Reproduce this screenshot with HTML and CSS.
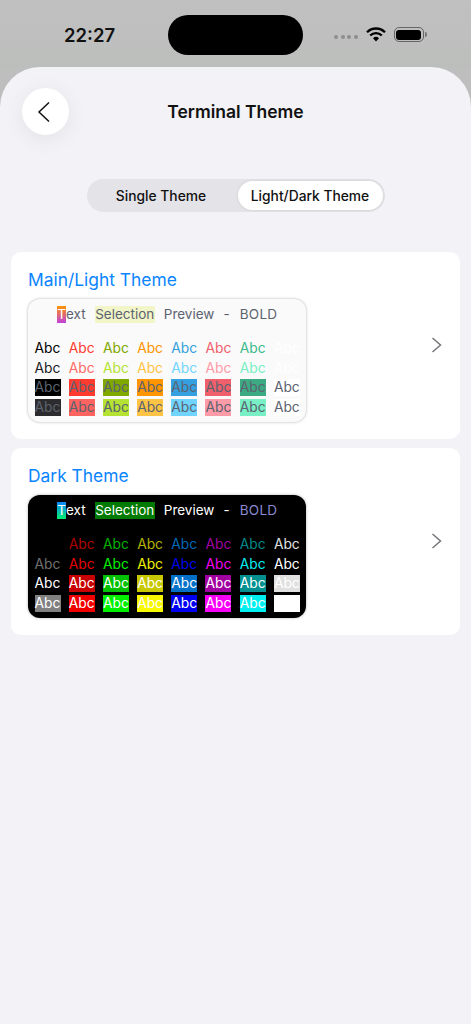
FILE: index.html
```html
<!DOCTYPE html>
<html>
<head>
  <title>Terminal Theme</title>
  <link rel="stylesheet" href="styles.css">
</head>
<body>
  <div class="status-bar">
    <span class="time">22:27</span>
    <div class="island"></div>
    <div class="status-icons">
      <div class="dots"><i></i><i></i><i></i><i></i></div>
      <svg class="wifi" width="20" height="15" viewBox="0 0 20 15">
        <path d="M1 5.2a12.8 12.8 0 0 1 18 0" fill="none" stroke="#000" stroke-width="2.3"/>
        <path d="M4.2 8.5a8.2 8.2 0 0 1 11.6 0" fill="none" stroke="#000" stroke-width="2.3"/>
        <path d="M7 11.3a4.3 4.3 0 0 1 6 0L10 14.4z" fill="#000"/>
      </svg>
      <div class="battery"><div class="battery-fill"></div></div>
      <div class="battery-cap"></div>
    </div>
  </div>

  <div class="sheet">
    <header class="nav">
      <button class="back">
        <svg width="14" height="22" viewBox="0 0 14 22"><path d="M12 1.500 2 11l10 9.500" fill="none" stroke="#111" stroke-width="1.5"/></svg>
      </button>
      <h1>Terminal Theme</h1>
    </header>

    <div class="segment">
      <div class="seg-item">Single Theme</div>
      <div class="seg-item active">Light/Dark Theme</div>
    </div>

    <section class="card">
      <div class="card-body">
        <h2>Main/Light Theme</h2>
        <div class="preview light">
          <div class="line">
            <span class="cursor">T</span><span>ext</span>
            <span class="sel">Selection</span>
            <span class="word">Preview</span>
            <span class="word">-</span>
            <span class="bold">BOLD</span>
          </div>
          <div class="grid">
            <span style="color:#000">Abc</span><span style="color:#ff3b30">Abc</span><span style="color:#7fa800">Abc</span><span style="color:#ff9500">Abc</span><span style="color:#34a0e0">Abc</span><span style="color:#f0606c">Abc</span><span style="color:#3cba8a">Abc</span><span style="color:#fff">Abc</span>
            <span style="color:#1c1c1e">Abc</span><span style="color:#ff6b66">Abc</span><span style="color:#b4e333">Abc</span><span style="color:#ffc445">Abc</span><span style="color:#70d4ff">Abc</span><span style="color:#ff9aa8">Abc</span><span style="color:#78efc4">Abc</span><span style="color:#fff">Abc</span>
            <span style="background:#000">Abc</span><span style="background:#ff3b30">Abc</span><span style="background:#7fa800">Abc</span><span style="background:#ff9500">Abc</span><span style="background:#34a0e0">Abc</span><span style="background:#f0606c">Abc</span><span style="background:#3cab84">Abc</span><span style="background:#fff">Abc</span>
            <span style="background:#2c2c2e">Abc</span><span style="background:#ff6460">Abc</span><span style="background:#b4e333">Abc</span><span style="background:#ffc445">Abc</span><span style="background:#70d4ff">Abc</span><span style="background:#ff9aa8">Abc</span><span style="background:#78efc4">Abc</span><span style="background:#fff">Abc</span>
          </div>
        </div>
      </div>
      <svg class="chevron" width="11" height="18" viewBox="0 0 11 18"><path d="M1.500 2 9.500 9l-8 7" fill="none" stroke="#76767a" stroke-width="1.500"/></svg>
    </section>

    <section class="card">
      <div class="card-body">
        <h2>Dark Theme</h2>
        <div class="preview dark">
          <div class="line">
            <span class="cursor">T</span><span>ext</span>
            <span class="sel">Selection</span>
            <span class="word">Preview</span>
            <span class="word">-</span>
            <span class="bold">BOLD</span>
          </div>
          <div class="grid">
            <span style="color:#000">Abc</span><span style="color:#b20000">Abc</span><span style="color:#00b200">Abc</span><span style="color:#b2b200">Abc</span><span style="color:#0068b8">Abc</span><span style="color:#a000a0">Abc</span><span style="color:#008888">Abc</span><span style="color:#e0e0e0">Abc</span>
            <span style="color:#707070">Abc</span><span style="color:#e60000">Abc</span><span style="color:#00f000">Abc</span><span style="color:#f0f000">Abc</span><span style="color:#0000f0">Abc</span><span style="color:#f000f0">Abc</span><span style="color:#00f0f0">Abc</span><span style="color:#fff">Abc</span>
            <span style="background:#000">Abc</span><span style="background:#c80000">Abc</span><span style="background:#00c000">Abc</span><span style="background:#c8c800">Abc</span><span style="background:#0070c8">Abc</span><span style="background:#a000a0">Abc</span><span style="background:#009090">Abc</span><span style="background:#e0e0e0">Abc</span>
            <span style="background:#808080">Abc</span><span style="background:#f00000">Abc</span><span style="background:#00f000">Abc</span><span style="background:#f8f800">Abc</span><span style="background:#0000f0">Abc</span><span style="background:#f800f8">Abc</span><span style="background:#00f0f0">Abc</span><span style="background:#fff">Abc</span>
          </div>
        </div>
      </div>
      <svg class="chevron" width="11" height="18" viewBox="0 0 11 18"><path d="M1.500 2 9.500 9l-8 7" fill="none" stroke="#76767a" stroke-width="1.500"/></svg>
    </section>
  </div>
</body>
</html>
```

FILE: styles.css
```css
html, body {
  margin: 0;
  height: 1024px;
  overflow: hidden;
}
body {
  font-family: Inter, "Liberation Sans", sans-serif;
  background-color: #bdbebd;
  display: flex;
  flex-direction: column;
}
.status-bar {
  height: 67px;
  position: relative;
  background: linear-gradient(#c0c0c0, #bcbebc);
  flex-shrink: 0;
}
.time {
  position: absolute;
  left: 64px;
  top: 24px;
  font-size: 18.5px;
  line-height: 23px;
  font-weight: 600;
  color: #111;
}
.island {
  position: absolute;
  left: 168px;
  top: 15px;
  width: 135px;
  height: 40px;
  border-radius: 20px;
  background-color: #000;
}
.status-icons {
  position: absolute;
  left: 334px;
  top: 26px;
  display: flex;
  align-items: center;
  height: 17px;
}
.dots {
  display: flex;
  gap: 2.6px;
  margin-top: 5px;
  margin-right: 8px;
}
.dots i {
  width: 4px;
  height: 4px;
  border-radius: 50%;
  background-color: #8e8e8e;
}
.wifi {
  margin-right: 8px;
}
.battery {
  width: 30px;
  height: 15px;
  box-sizing: border-box;
  border: 1px solid #666;
  border-radius: 5px;
  padding: 1.5px;
}
.battery-fill {
  height: 100%;
  background-color: #000;
  border-radius: 3px;
}
.battery-cap {
  width: 2px;
  height: 5px;
  margin-left: 1px;
  background-color: #777;
  border-radius: 0 2px 2px 0;
}
.sheet {
  flex: 1;
  background-color: #f2f2f7;
  border-radius: 40px 40px 0 0;
  padding: 0 11px;
}
.nav {
  height: 90px;
  position: relative;
  display: flex;
  align-items: center;
  justify-content: center;
}
.nav h1 {
  margin: 0 0 1px;
  font-size: 17.5px;
  font-weight: 600;
  color: #111;
}
.back {
  position: absolute;
  left: 11px;
  top: 21px;
  width: 47px;
  height: 47px;
  border: 0;
  border-radius: 50%;
  background-color: #fff;
  box-shadow: 0 4px 22px rgba(0, 0, 0, 0.07);
  display: flex;
  align-items: center;
  justify-content: center;
  padding: 0;
}
.back svg {
  margin-right: 4px;
}
.segment {
  width: 298px;
  height: 33px;
  margin: 22px auto 40px;
  box-sizing: border-box;
  padding: 2px;
  display: flex;
  border-radius: 17px;
  background-color: #e3e3e8;
  font-size: 13.8px;
  font-weight: 500;
  color: #111;
}
.seg-item {
  display: flex;
  align-items: center;
  justify-content: center;
  border-radius: 15px;
  width: 145px;
  padding-right: 4px;
}
.seg-item.active {
  width: 145px;
  padding-right: 0;
  background-color: #fff;
  box-shadow: 0 0 3px rgba(0, 0, 0, 0.1);
}
.card {
  background-color: #fff;
  border-radius: 10px;
  height: 186.5px;
  margin-bottom: 9.5px;
  box-sizing: border-box;
  padding: 0 17px;
  display: flex;
  align-items: center;
  justify-content: space-between;
}
.card-body {
  align-self: flex-start;
  padding-top: 17px;
}
.card h2 {
  margin: 0 0 8px;
  font-size: 17.4px;
  line-height: 22px;
  font-weight: 400;
  color: #0a84ff;
}
.preview {
  width: 278px;
  height: 122.5px;
  box-sizing: border-box;
  border-radius: 12px;
  padding: 0 6.5px;
  font-size: 13.8px;
}
.preview.light {
  background-color: #fafafa;
  color: #5c6370;
  box-shadow: 0 0 3px rgba(0, 0, 0, 0.3);
}
.preview.dark {
  background-color: #000;
  color: #fff;
  box-shadow: 0 0 3px rgba(0, 0, 0, 0.3);
}
.line {
  height: 30px;
  padding-left: 22.5px;
  display: flex;
  align-items: center;
  white-space: nowrap;
  font-size: 13.5px;
}
.cursor {
  width: 9px;
  height: 17px;
  line-height: 17px;
  text-align: center;
  color: #fff;
}
.light .cursor {
  background: linear-gradient(#ff9500, #c040e0);
}
.dark .cursor {
  background: linear-gradient(#0a84ff, #00f070);
}
.sel {
  margin-left: 9px;
  padding: 0 0.5px;
  line-height: 17px;
}
.light .sel {
  background-color: #f2f5c8;
}
.dark .sel {
  background-color: #007a00;
}
.word {
  margin-left: 9px;
}
.bold {
  margin-left: 10px;
  letter-spacing: 0.3px;
}
.dark .bold {
  color: #8a8ad0;
}
.grid {
  margin-top: 11px;
  display: grid;
  grid-template-columns: repeat(8, 26px);
  column-gap: 8.2px;
  row-gap: 2.6px;
}
.grid span {
  height: 17px;
  line-height: 17px;
  text-align: center;
}
.chevron {
  margin-right: 1px;
  flex-shrink: 0;
}
```
